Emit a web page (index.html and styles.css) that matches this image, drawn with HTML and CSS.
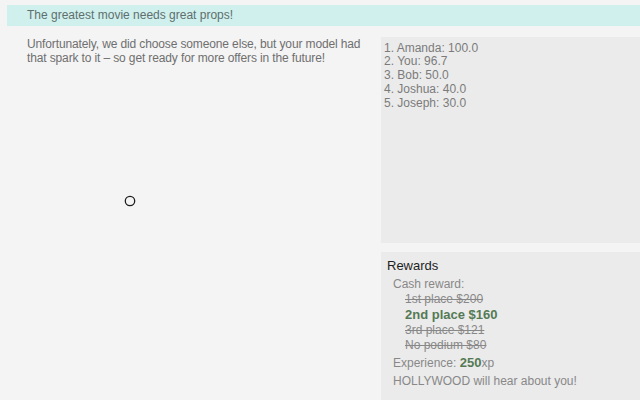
FILE: index.html
```html
<!DOCTYPE html>
<html lang="en">
  <head>
    <meta charset="UTF-8" />
    <title>Casting result</title>
    <link rel="stylesheet" href="styles.css">
  </head>
  <body>
    <div class="page">
      <div class="banner">The greatest movie needs great props!</div>
      <div class="content">
        <div class="story">
          <p>
            Unfortunately, we did choose someone else, but your model had
            that spark to it &ndash; so get ready for more offers in the future!
          </p>
        </div>
        <div class="side">
          <ol class="ranking">
            <li>1. Amanda: 100.0</li>
            <li>2. You: 96.7</li>
            <li>3. Bob: 50.0</li>
            <li>4. Joshua: 40.0</li>
            <li>5. Joseph: 30.0</li>
          </ol>
          <div class="rewards">
            <h2>Rewards</h2>
            <div class="reward-body">
              <div>Cash reward:</div>
              <ul class="cash">
                <li class="missed">1st place $200</li>
                <li class="won">2nd place $160</li>
                <li class="missed">3rd place $121</li>
                <li class="missed">No podium $80</li>
              </ul>
              <div class="xp">Experience: <b>250</b>xp</div>
              <div class="note">HOLLYWOOD will hear about you!</div>
            </div>
          </div>
        </div>
      </div>
      <svg class="cursor" width="12" height="12" viewBox="0 0 12 12">
        <circle cx="6" cy="6" r="4.7" fill="none" stroke="#1c1c1c" stroke-width="1.3" />
      </svg>
    </div>
  </body>
</html>
```

FILE: styles.css
```css
* {
  box-sizing: border-box;
  margin: 0;
  padding: 0;
}
html,
body {
  height: 100%;
  overflow: hidden;
}
body {
  background: #f4f4f4;
  font-family: 'Liberation Sans', Arial, sans-serif;
  font-size: 12px;
}
.page {
  position: relative;
  height: 100%;
  padding: 5px 0 0 7px;
}
.banner {
  background: #cff0ed;
  color: #5f6f6d;
  height: 21px;
  line-height: 21px;
  padding-left: 20px;
}
.content {
  display: grid;
  grid-template-columns: 374px 1fr;
  margin-top: 11px;
}
.story {
  padding: 1px 10px 0 20px;
  color: #6f6f6f;
  line-height: 13.5px;
  letter-spacing: -0.13px;
}
.side {
  display: flex;
  flex-direction: column;
  gap: 9px;
}
.ranking {
  list-style: none;
  background: #ebebeb;
  height: 206px;
  padding: 4.5px 3px;
  color: #7b7b7b;
  line-height: 13.8px;
}
.rewards {
  background: #ebebeb;
  height: 160px;
  padding: 5px 6px;
}
.rewards h2 {
  font-size: 13px;
  font-weight: normal;
  color: #1e1e1e;
  line-height: 18px;
}
.reward-body {
  margin-top: 2px;
  padding-left: 6px;
  color: #888;
  line-height: 15.2px;
}
.cash {
  list-style: none;
  padding-left: 12px;
}
.missed {
  text-decoration: line-through;
}
.won {
  color: #547a55;
  font-weight: bold;
  font-size: 13px;
}
.xp {
  margin-top: 2px;
}
.xp b {
  color: #547a55;
  font-size: 13px;
}
.note {
  margin-top: 3px;
}
.cursor {
  position: absolute;
  left: 124px;
  top: 195px;
}
```
